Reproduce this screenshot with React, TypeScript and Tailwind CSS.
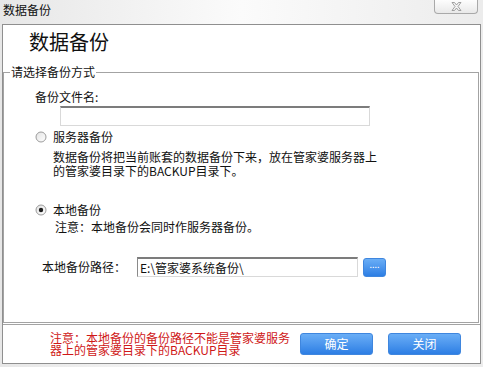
import React from 'react'

const font = "font-['Noto_Sans_CJK_SC','Noto_Sans',sans-serif]"

function Radio({ checked }: { checked?: boolean }) {
  return (
    <svg width="12" height="12" viewBox="0 0 12 12" className="shrink-0">
      <defs>
        <linearGradient id={checked ? 'rg1' : 'rg0'} x1="0" y1="0" x2="1" y2="1">
          <stop offset="0" stopColor="#e2e2e2" />
          <stop offset="1" stopColor="#ffffff" />
        </linearGradient>
      </defs>
      <circle cx="6" cy="6" r="5" fill={`url(#${checked ? 'rg1' : 'rg0'})`} stroke="#9c9c9c" strokeWidth="1" />
      {checked && <circle cx="6" cy="6" r="2.2" fill="#1e1e1e" />}
    </svg>
  )
}

function BlueButton({ label }: { label: string }) {
  return (
    <button className="w-[73px] h-[22px] rounded-[3px] bg-linear-to-b from-[#6aaef6] to-[#2c7ee4] border border-[#3f86de] text-white text-[12px] leading-[20px]">
      {label}
    </button>
  )
}

export default function App() {
  return (
    <div className={`w-[483px] h-[367px] overflow-hidden bg-linear-to-r from-[#e7e7e7] via-[#fbfbfb] to-[#ececec] text-[#111] ${font}`}>
      {/* title bar */}
      <div className="h-[24px] flex items-start">
        <span className="pl-[3px] pt-[2px] text-[12px] leading-[16px]">数据备份</span>
        <div className="ml-auto mr-[5px] w-[44px] h-[14px] rounded-b-[4px] border border-t-0 border-[#a9a9a9] bg-linear-to-b from-[#fdfdfd] to-[#e9e9e9] flex items-center justify-center">
          <svg width="11" height="9" viewBox="0 0 11 9">
            <path d="M1 0.5 L3.5 0.5 L5.5 3 L7.5 0.5 L10 0.5 L7 4.5 L10 8.5 L7.5 8.5 L5.5 6 L3.5 8.5 L1 8.5 L4 4.5 Z" fill="#f4f4f4" stroke="#8d8d8d" strokeWidth="0.8" />
          </svg>
        </div>
      </div>

      {/* panel */}
      <div className="ml-[2px] w-[479px] h-[340px] border border-[#8f8f8f] bg-white flex flex-col">
        <div className="h-[40px] pl-[26px] pt-[3px] text-[20px] leading-[28px]">数据备份</div>

        <fieldset className="h-[258px] border border-[#a3a3a3] mr-[1px]">
          <legend className="ml-[6px] px-[1px] text-[12px] leading-[14px]">请选择备份方式</legend>

          <div className="mt-[10px] pl-[31px] text-[12px] leading-[16px]">备份文件名:</div>
          <div className="mt-[1px] ml-[56px] w-[310px] h-[20px] border-t-2 border-t-[#7c7c7c] border-x border-b border-[#d9d9d9]" />

          <div className="mt-[3px] pl-[31px] h-[16px] flex items-center gap-[6px] text-[12px]">
            <Radio />
            <span className="leading-[16px]">服务器备份</span>
          </div>
          <div className="mt-[5px] pl-[49px] text-[12px] leading-[14px]">
            <p>数据备份将把当前账套的数据备份下来，放在管家婆服务器上</p>
            <p>的管家婆目录下的BACKUP目录下。</p>
          </div>

          <div className="mt-[24px] pl-[31px] h-[16px] flex items-center gap-[6px] text-[12px]">
            <Radio checked />
            <span className="leading-[16px]">本地备份</span>
          </div>
          <div className="mt-[2px] pl-[51px] text-[12px] leading-[14px]">注意：本地备份会同时作服务器备份。</div>

          <div className="mt-[23px] pl-[38px] flex items-center h-[20px]">
            <span className="w-[95px] text-[12px] leading-[16px]">本地备份路径：</span>
            <div className="w-[221px] h-[20px] border-t-2 border-l border-t-[#7c7c7c] border-l-[#8a8a8a] border-r border-b border-r-[#d9d9d9] border-b-[#d9d9d9] pl-[2px] text-[12px] leading-[17px]">
              E:\管家婆系统备份\
            </div>
            <button className="ml-[5px] w-[23px] h-[19px] rounded-[3px] bg-linear-to-b from-[#6aaef6] to-[#2c7ee4] border border-[#3f86de] text-white text-[9px] leading-[22px] flex justify-center items-end">
              ....
            </button>
          </div>
        </fieldset>

        <div className="mt-[1px] flex-1 border-t border-[#a3a3a3] flex items-center pl-[47px]">
          <div className="w-[242px] text-[12px] leading-[12px] text-[#cf1818]">
            注意：本地备份的备份路径不能是管家婆服务器上的管家婆目录下的BACKUP目录
          </div>
          <div className="ml-[8px] flex gap-[15px]">
            <BlueButton label="确定" />
            <BlueButton label="关闭" />
          </div>
        </div>
      </div>
    </div>
  )
}
